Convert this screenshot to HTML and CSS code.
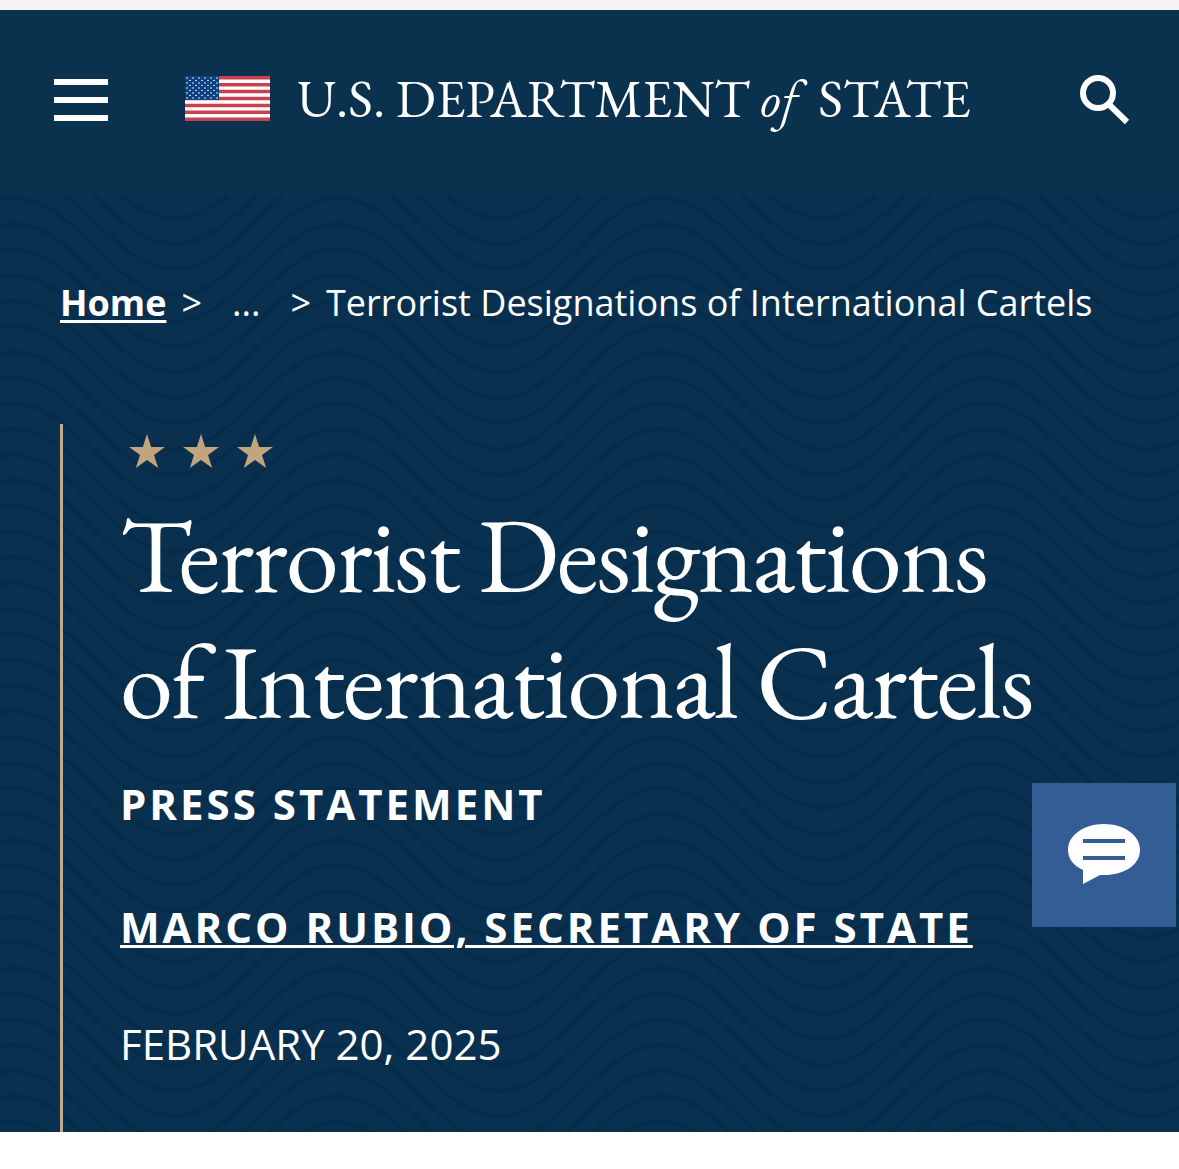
FILE: index.html
```html
<!DOCTYPE html>
<html lang="en">
<head>
<meta charset="utf-8">
<meta name="viewport" content="width=device-width, initial-scale=1">
<title>Terrorist Designations of International Cartels</title>
<link rel="stylesheet" href="styles.css">
</head>
<body>
<header class="site-header">
  <button class="icon-button" type="button" aria-label="Menu">
    <svg width="54" height="42" viewBox="0 0 54 42" aria-hidden="true"><path fill="#fff" d="M0 0h54v6H0zM0 18h54v6H0zM0 36h54v6H0z"/></svg>
  </button>
  <a class="brand" href="#">
    <svg class="flag" width="85" height="45" viewBox="0 0 85 45" aria-hidden="true">
      <defs>
        <pattern id="stars" width="6" height="5" patternUnits="userSpaceOnUse">
          <circle cx="2" cy="2" r="0.8" fill="#fff"/><circle cx="5" cy="4.500" r="0.8" fill="#fff"/>
        </pattern>
      </defs>
      <rect width="85" height="45" fill="#c8414f"/>
      <path stroke="#fff" stroke-width="3.460" d="M0 5.190h85M0 12.110h85M0 19.040h85M0 25.960h85M0 32.880h85M0 39.810h85"/>
      <rect width="34" height="24" fill="#0b4081"/>
      <rect width="34" height="24" fill="url(#stars)"/>
    </svg>
    <span class="brand-name">U.S. DEPARTMENT <em>of</em> STATE</span>
  </a>
  <button class="icon-button" type="button" aria-label="Search">
    <svg width="50" height="50" viewBox="0 0 50 50" fill="none" stroke="#fff" stroke-width="6" aria-hidden="true"><circle cx="18" cy="18" r="15"/><path d="M29 29.500L47 47"/></svg>
  </button>
</header>
<main class="hero">
  <svg class="waves" aria-hidden="true">
    <defs>
      <pattern id="wave" x="13" y="3" width="324" height="77" patternUnits="userSpaceOnUse">
        <g fill="none" stroke="#052c49" stroke-width="4">
          <path d="M0 -103C63 -103 99 -6 162 -6S261 -103 324 -103"/>
          <path d="M0 -77C63 -77 99 20 162 20S261 -77 324 -77"/>
          <path d="M0 -51C63 -51 99 46 162 46S261 -51 324 -51"/>
          <path d="M0 -26C63 -26 99 71 162 71S261 -26 324 -26"/>
          <path d="M0 0C63 0 99 97 162 97S261 0 324 0"/>
          <path d="M0 26C63 26 99 123 162 123S261 26 324 26"/>
          <path d="M0 51C63 51 99 148 162 148S261 51 324 51"/>
          <path d="M0 77C63 77 99 174 162 174S261 77 324 77"/>
        </g>
      </pattern>
    </defs>
    <rect width="100%" height="100%" fill="url(#wave)"/>
  </svg>
  <nav class="breadcrumb" aria-label="Breadcrumb">
    <a href="#">Home</a><span>&gt;</span><span class="ellipsis">...</span><span>&gt;</span><span>Terrorist Designations of International Cartels</span>
  </nav>
  <article class="statement">
    <svg class="stars" width="144" height="34" viewBox="0 0 144 34" fill="#c2a57e" aria-hidden="true">
      <path id="star" d="M18 0l4.200 13H36l-11 8 4.200 13L18 26 6.800 34 11 21 0 13h13.800z"/>
      <use href="#star" x="54"/><use href="#star" x="108"/>
    </svg>
    <h1>Terrorist Designations of International Cartels</h1>
    <p class="kind">Press Statement</p>
    <p class="author"><a href="#">Marco Rubio, Secretary of State</a></p>
    <p class="date">February 20, 2025</p>
  </article>
</main>
<button class="feedback" type="button" aria-label="Feedback">
  <svg width="72" height="60" viewBox="0 0 72 60" aria-hidden="true"><path fill="#fff" d="M36 0c20 0 36 11 36 26S56 51 36 51h-4L15 60V46C6 42 0 35 0 26 0 11 16 0 36 0z"/><path fill="#345d96" d="M15 15h42v4H15zM15 32h42v4H15z"/></svg>
</button>
</body>
</html>
```
FILE: styles.css
```css
* { box-sizing: border-box; }
body {
  margin: 0;
  border-top: 10px solid #f5f3f5;
  background: #fff;
  color: #fff;
  font-family: "Open Sans", "Noto Sans", sans-serif;
}
.site-header {
  display: flex;
  align-items: center;
  height: 185px;
  padding: 0 49px 5px 54px;
  background: #0a314e;
}
.icon-button {
  display: flex;
  padding: 0;
  border: 0;
  background: none;
}
.brand {
  display: flex;
  align-items: center;
  gap: 27px;
  margin: 0 auto 0 77px;
  padding-bottom: 3px;
  color: #fff;
  text-decoration: none;
}
.brand-name {
  font-family: "EB Garamond", "Liberation Serif", serif;
  font-size: 53px;
  line-height: 60px;
  white-space: nowrap;
}
.brand-name em { margin-right: 10px; }
.hero {
  position: relative;
  padding: 78px 60px 0;
  background: #09304f;
}
.waves {
  position: absolute;
  inset: 0;
  width: 100%;
  height: 100%;
}
.breadcrumb {
  position: relative;
  display: flex;
  gap: 15px;
  font-size: 36px;
  line-height: 60px;
  white-space: nowrap;
}
.breadcrumb a {
  color: #fff;
  font-weight: 700;
  text-underline-offset: 4px;
}
.ellipsis { padding: 0 15px; }
.statement {
  position: relative;
  margin-top: 91px;
  padding: 10px 0 58px 57px;
  border-left: 3px solid #c2a98a;
}
.stars {
  display: block;
  margin-left: 9px;
}
h1 {
  max-width: 940px;
  margin: 23px 0 0;
  font-family: "EB Garamond", "Liberation Serif", serif;
  font-size: 107px;
  font-weight: 400;
  line-height: 126px;
  letter-spacing: -2px;
}
.statement p {
  margin: 0;
  font-size: 42px;
  line-height: 60px;
  text-transform: uppercase;
}
.statement .kind,
.statement .author {
  font-weight: 700;
  letter-spacing: 3px;
}
.statement .kind { margin-top: 31px; }
.statement .author { margin-top: 63px; }
.statement .date { margin-top: 57px; }
.author a {
  color: #fff;
  text-decoration-thickness: 3px;
}
.feedback {
  position: fixed;
  top: 783px;
  right: 3px;
  display: flex;
  align-items: center;
  justify-content: center;
  width: 144px;
  height: 144px;
  padding: 0 0 2px;
  border: 0;
  background: #345d96;
}
```
